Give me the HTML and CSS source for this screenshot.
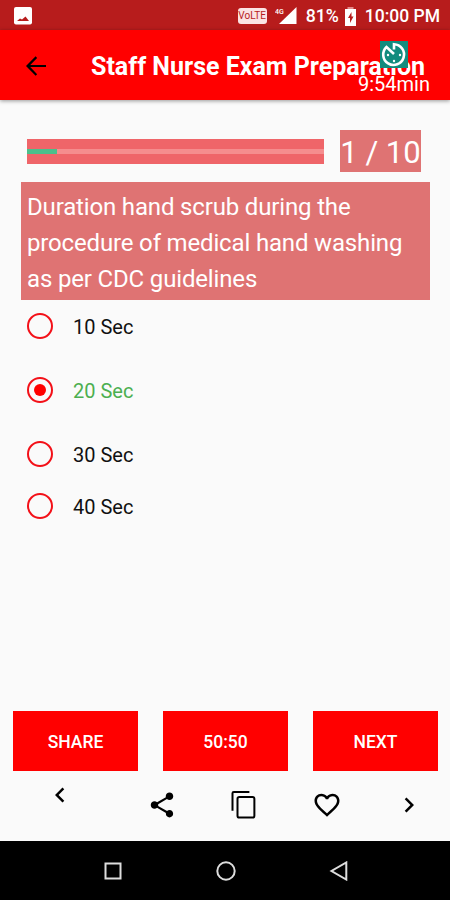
FILE: index.html
```html
<!DOCTYPE html>
<html lang="en">
<head>
  <meta charset="UTF-8">
  <title>Staff Nurse Exam Preparation</title>
  <link rel="stylesheet" href="styles.css">
</head>
<body>
  <div class="statusbar">
    <svg class="picture" width="18" height="18" viewBox="0 0 18 18"><rect width="18" height="17.500" rx="2" fill="#fff"/><path d="M3 14l3-2.500 2 1 3.500-3 3.500 4.500z" fill="#b71c1c"/></svg>
    <span class="volte">VoLTE</span>
    <svg class="signal" width="22" height="18" viewBox="0 0 22 18"><path d="M21.500 0v17H4z" fill="#fff"/><text x="0" y="7" class="net">4G</text></svg>
    <span class="percent">81%</span>
    <svg class="battery" width="11" height="19" viewBox="0 0 11 19"><path d="M2.500 0h6v2H2.500z" fill="#e58a8a"/><path d="M0 2h11v17H0z" fill="#fff"/><path d="M6.500 5L3 11h2v5l3.500-6.500h-2z" fill="#b71c1c"/></svg>
    <span class="clock">10:00 PM</span>
  </div>

  <header>
    <svg class="icon back" viewBox="0 0 24 24"><path d="M20 11.200H7.400l5.500-5.700L11.700 4.200 4 12l7.700 7.800 1.200-1.300-5.500-5.700H20z"/></svg>
    <h1>Staff Nurse Exam Preparation</h1>
    <div class="timer">
      <svg width="28" height="27" viewBox="0 0 28 27">
        <rect width="28" height="27" fill="#128c7e"/>
        <path d="M14 8.500V3.200A10.400 10.400 0 1 1 6.500 6L14 13" fill="none" stroke="#fff" stroke-width="2.600"/>
        <g fill="#fff"><circle cx="8" cy="14" r="1.200"/><circle cx="20" cy="14" r="1.200"/><circle cx="14" cy="20" r="1.200"/></g>
      </svg>
      <span>9:54min</span>
    </div>
  </header>

  <main>
    <div class="progress-row">
      <div class="progress"><div class="track"><div class="fill" style="width: 10%"></div></div></div>
      <div class="count">1 / 10</div>
    </div>
    <p class="question">Duration hand scrub during the procedure of medical hand washing as per CDC guidelines</p>
    <div class="options">
      <label class="tall"><i class="radio"></i><span>10 Sec</span></label>
      <label class="tall right"><i class="radio on"></i><span>20 Sec</span></label>
      <label><i class="radio"></i><span>30 Sec</span></label>
      <label><i class="radio"></i><span>40 Sec</span></label>
    </div>
  </main>

  <div class="buttons">
    <button>SHARE</button>
    <button>50:50</button>
    <button>NEXT</button>
  </div>

  <div class="tools">
    <svg class="icon prev" viewBox="0 0 24 24"><path d="M15.410 7.410L14 6l-6 6 6 6 1.410-1.410L10.830 12z"/></svg>
    <svg class="icon share" viewBox="0 0 24 24"><path d="M18 16.080c-.76 0-1.440.3-1.960.77L8.910 12.700c.05-.23.09-.46.09-.7s-.04-.47-.09-.7l7.050-4.110c.54.5 1.250.81 2.040.81 1.660 0 3-1.340 3-3s-1.340-3-3-3-3 1.340-3 3c0 .24.04.47.09.7L8.040 9.810C7.500 9.310 6.790 9 6 9c-1.660 0-3 1.340-3 3s1.340 3 3 3c.79 0 1.500-.31 2.040-.81l7.120 4.160c-.05.21-.08.43-.08.65 0 1.610 1.310 2.920 2.920 2.920s2.920-1.310 2.920-2.920-1.310-2.920-2.920-2.920z"/></svg>
    <svg class="icon copy" viewBox="0 0 24 24"><path d="M2 16.500V2.500q0-1 1-1h12.500"/><rect x="6" y="5.500" width="13.500" height="16.500" rx="1.500"/></svg>
    <svg class="icon heart" viewBox="0 0 24 24"><path d="M16.500 3c-1.740 0-3.410.81-4.500 2.090C10.910 3.810 9.240 3 7.500 3 4.420 3 2 5.420 2 8.500c0 3.780 3.400 6.860 8.550 11.540L12 21.350l1.450-1.320C18.600 15.360 22 12.280 22 8.500 22 5.420 19.580 3 16.500 3zm-4.400 15.550l-.1.100-.1-.1C7.140 14.240 4 11.390 4 8.500 4 6.500 5.500 5 7.500 5c1.540 0 3.040.99 3.570 2.360h1.870C13.460 5.990 14.960 5 16.500 5c2 0 3.500 1.500 3.500 3.500 0 2.890-3.140 5.740-7.900 10.050z"/></svg>
    <svg class="icon next" viewBox="0 0 24 24"><path d="M10 6L8.590 7.410 13.170 12l-4.580 4.590L10 18l6-6z"/></svg>
  </div>

  <nav>
    <svg width="20" height="20" viewBox="0 0 20 20"><rect x="2.500" y="2.500" width="15" height="15"/></svg>
    <svg width="20" height="20" viewBox="0 0 20 20"><circle cx="10" cy="10" r="8.700"/></svg>
    <svg width="20" height="20" viewBox="0 0 20 20"><path d="M17.300 1.500v17L2.500 10z"/></svg>
  </nav>
</body>
</html>
```
FILE: styles.css
```css
* { box-sizing: border-box; }
body { margin: 0; width: 450px; height: 900px; display: flex; flex-direction: column; background: #fafafa; font-family: Roboto, sans-serif; color: #111; overflow: hidden; }
svg { display: block; flex: none; }
.icon { width: 30px; height: 30px; fill: #000; }

.statusbar { height: 30px; display: flex; align-items: center; padding: 2px 10px 0 14px; background: #b71c1c; color: #fff; font-size: 17.700px; font-weight: 500; white-space: nowrap; }
.volte { width: 29px; height: 16px; margin-left: auto; border-radius: 3px; background: #fbe3e3; color: #b71c1c; font-size: 10px; line-height: 16px; text-align: center; font-weight: 400; }
.signal { margin-left: 8px; }
.net { font-size: 7px; fill: #fff; }
.percent { margin-left: 9px; }
.battery { margin-left: 6px; }
.clock { margin-left: 9px; font-size: 17.500px; }

header { position: relative; height: 70px; display: flex; align-items: center; padding-left: 21px; background: #f00; color: #fff; box-shadow: 0 1px 4px rgba(0,0,0,0.4); }
.back { margin-top: 2px; }
h1 { margin: 4px 0 0 40px; font-size: 25px; line-height: 30px; font-weight: 700; white-space: nowrap; }
.timer { position: absolute; top: 11px; right: 20px; display: flex; flex-direction: column; align-items: center; font-size: 20px; line-height: 24px; }
.timer span { margin-top: 4px; }

main { padding: 30px 20px 0; }
.progress-row { display: flex; align-items: center; justify-content: space-between; padding: 0 9px 0 7px; }
.progress { width: 297px; height: 25px; padding: 10px 0; background: #ef6569; }
.track { height: 5px; background: #f58d8e; }
.fill { height: 5px; background: #4bbf8b; }
.count { width: 81px; height: 42px; background: #df7373; color: #fff; font-size: 31px; line-height: 46px; text-align: center; white-space: nowrap; }
.question { margin: 10px 0 0 1px; height: 118px; padding: 7px 6px; background: #df7373; color: #fff; font-size: 24px; line-height: 36px; letter-spacing: -0.16px; }
.options { padding-left: 7px; }
label { display: flex; align-items: center; height: 52px; font-size: 20px; }
label span { padding-top: 2px; }
.tall { height: 64px; padding-bottom: 12px; }
.radio { width: 26px; height: 26px; margin-right: 20px; border: 2px solid #f31018; border-radius: 50%; }
.on { padding: 5px; background: #f00 content-box; }
.right { color: #4caf50; }

.buttons { display: flex; gap: 25px; margin-top: auto; padding: 0 12px 0 13px; }
button { flex: 1; height: 60px; padding: 1px 0 0; border: none; background: #f00; color: #fff; font: 500 17.500px Roboto, sans-serif; }
.tools { display: flex; height: 70px; padding: 19px 26px 0 45px; }
.prev { margin-top: -10px; }
.share { margin-left: 72px; }
.copy { margin-left: 53px; fill: none; stroke: #000; stroke-width: 1.600; }
.heart { margin-left: 52px; }
.next { margin-left: auto; }

nav { height: 59px; display: flex; align-items: center; justify-content: center; gap: 93px; padding-left: 1px; background: #000; }
nav svg { fill: none; stroke: #ddd; stroke-width: 2; }
```
